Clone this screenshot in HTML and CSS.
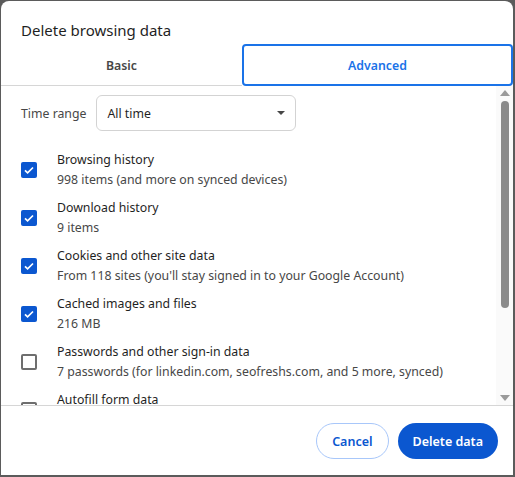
FILE: index.html
```html
<!DOCTYPE html>
<html lang="en">
<head>
    <meta charset="UTF-8">
    <title>Delete browsing data</title>
    <link rel="stylesheet" href="styles.css">
</head>
<body>
    <div class="dialog">
        <div class="title">Delete browsing data</div>
        <div class="tabs">
            <div class="tab">Basic</div>
            <div class="tab active">Advanced</div>
        </div>
        <div class="body">
            <div class="list">
                <div class="range">
                    <span class="range-label">Time range</span>
                    <div class="select">
                        <span>All time</span>
                        <span class="caret"></span>
                    </div>
                </div>
                <div class="item">
                    <span class="box checked"></span>
                    <div class="text">
                        <div class="name">Browsing history</div>
                        <div class="sub">998 items (and more on synced devices)</div>
                    </div>
                </div>
                <div class="item">
                    <span class="box checked"></span>
                    <div class="text">
                        <div class="name">Download history</div>
                        <div class="sub">9 items</div>
                    </div>
                </div>
                <div class="item">
                    <span class="box checked"></span>
                    <div class="text">
                        <div class="name">Cookies and other site data</div>
                        <div class="sub">From 118 sites (you'll stay signed in to your Google Account)</div>
                    </div>
                </div>
                <div class="item">
                    <span class="box checked"></span>
                    <div class="text">
                        <div class="name">Cached images and files</div>
                        <div class="sub">216 MB</div>
                    </div>
                </div>
                <div class="item">
                    <span class="box"></span>
                    <div class="text">
                        <div class="name">Passwords and other sign-in data</div>
                        <div class="sub">7 passwords (for linkedin.com, seofreshs.com, and 5 more, synced)</div>
                    </div>
                </div>
                <div class="item">
                    <span class="box"></span>
                    <div class="text">
                        <div class="name">Autofill form data</div>
                    </div>
                </div>
            </div>
            <div class="scrollbar">
                <span class="arrow up"></span>
                <div class="track"><div class="thumb"></div></div>
                <span class="arrow down"></span>
            </div>
        </div>
        <div class="footer">
            <button class="btn cancel">Cancel</button>
            <button class="btn primary">Delete data</button>
        </div>
    </div>
</body>
</html>
```

FILE: styles.css
```css
body {
    margin: 0;
    height: 477px;
    background-color: #5b5b5b;
    font-family: "Segoe UI", "Noto Sans", Arial, sans-serif;
    color: #1f1f1f;
    overflow: hidden;
}

.dialog {
    display: flex;
    flex-direction: column;
    margin: 1px 0 0 1px;
    width: 512px;
    height: 474px;
    background-color: #fff;
    border-radius: 8px 8px 0 0;
    overflow: hidden;
}

.title {
    padding: 19px 20px 0;
    height: 24px;
    font-size: 15px;
    line-height: 20px;
}

.tabs {
    display: grid;
    grid-template-columns: 241px 1fr;
    height: 42px;
}

.tab {
    display: flex;
    align-items: center;
    justify-content: center;
    padding-top: 2px;
    font-size: 12.3px;
    font-weight: 600;
    color: #474747;
    border-bottom: 1px solid #d6d6d6;
}

.tab.active {
    padding-top: 0;
    color: #1a73e8;
    border: 2px solid #1a73e8;
    border-radius: 4px;
}

.body {
    display: flex;
    height: 319px;
    border-bottom: 1px solid #d6d6d6;
}

.list {
    flex: 1;
    overflow: hidden;
    padding: 9px 0 0 20px;
}

.range {
    display: flex;
    align-items: center;
    gap: 10px;
    font-size: 12.3px;
    color: #474747;
}

.select {
    display: flex;
    align-items: center;
    justify-content: space-between;
    width: 178px;
    height: 34px;
    padding: 0 10px;
    border: 1px solid #d3d3d3;
    border-radius: 6px;
    color: #1f1f1f;
}

.caret {
    width: 0;
    height: 0;
    border-left: 4px solid transparent;
    border-right: 4px solid transparent;
    border-top: 4px solid #474747;
}

.item {
    display: flex;
    align-items: flex-start;
    gap: 20px;
    height: 40px;
    margin-top: 8px;
}

.range + .item {
    margin-top: 19px;
}

.box {
    box-sizing: border-box;
    width: 16px;
    height: 16px;
    margin-top: 12px;
    border: 2px solid #6e6e6e;
    border-radius: 2px;
    flex-shrink: 0;
}

.box.checked {
    border: none;
    background: #0b57d0 url("data:image/svg+xml,%3Csvg xmlns='http://www.w3.org/2000/svg' viewBox='0 0 16 16'%3E%3Cpath d='M4 8.3l2.6 2.6L12 5.5' fill='none' stroke='white' stroke-width='1.7'/%3E%3C/svg%3E") center / 16px no-repeat;
}

.text {
    font-size: 12.3px;
    line-height: 20px;
}

.sub {
    color: #474747;
}

.scrollbar {
    display: flex;
    flex-direction: column;
    align-items: center;
    width: 17px;
    background-color: #fafafa;
}

.arrow {
    width: 0;
    height: 0;
    margin: 4px 0;
    border-left: 5px solid transparent;
    border-right: 5px solid transparent;
}

.arrow.up {
    border-bottom: 6px solid #9a9a9a;
}

.arrow.down {
    border-top: 6px solid #9a9a9a;
}

.track {
    flex: 1;
    width: 100%;
    display: flex;
    justify-content: center;
}

.thumb {
    width: 8px;
    height: 207px;
    margin-top: 1px;
    background-color: #8b8b8b;
    border-radius: 4px;
}

.footer {
    display: flex;
    justify-content: flex-end;
    gap: 9px;
    padding: 17px 15px 0;
}

.btn {
    height: 36px;
    padding: 0 15px;
    border-radius: 18px;
    font-family: inherit;
    font-size: 12.5px;
    font-weight: 600;
    cursor: pointer;
}

.cancel {
    background: #fff;
    color: #0b57d0;
    border: 1px solid #a8c7fa;
}

.primary {
    background: #0b57d0;
    color: #fff;
    border: none;
}
```
